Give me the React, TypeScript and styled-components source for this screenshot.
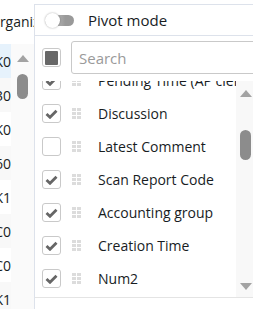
import React from 'react';
import styled, { createGlobalStyle } from 'styled-components';

const GlobalStyle = createGlobalStyle`
  html, body {
    margin: 0;
    padding: 0;
    background: #fff;
  }
  body {
    font-family: "Open Sans", "Noto Sans", sans-serif;
    color: #181d1f;
  }
`;

const Frame = styled.div`
  width: 253px;
  height: 309px;
  overflow: hidden;
  display: flex;
  background: #fff;
`;

/* ---- grid strip on the left ---- */

const GridStrip = styled.div`
  width: 34px;
  flex: 0 0 34px;
  display: flex;
  flex-direction: column;
  overflow: hidden;
`;

const GridHeader = styled.div`
  flex: 0 0 auto;
  height: 43px;
  padding-bottom: 2px;
  box-sizing: content-box;
  border-bottom: 1px solid #dde2eb;
  display: flex;
  align-items: center;
  overflow: hidden;
  font-size: 14px;
  white-space: nowrap;
`;

const HeaderText = styled.span`
  margin-left: -11px;
  color: #181d1f;
`;

const GridBody = styled.div`
  flex: 1;
  display: flex;
  margin-top: -2px;
`;

const CellColumn = styled.div`
  width: 11px;
  display: flex;
  flex-direction: column;
`;

const Cell = styled.div<{ $tone: 'sel' | 'odd' | 'even' }>`
  flex: 0 0 34px;
  height: 34px;
  display: flex;
  align-items: center;
  justify-content: flex-end;
  overflow: hidden;
  white-space: nowrap;
  font-size: 14px;
  background: ${({ $tone }) =>
    $tone === 'sel' ? '#e6f2fc' : $tone === 'odd' ? '#f8f8f8' : '#fff'};
`;

const ScrollTrack = styled.div<{ $pad: number }>`
  flex: 1;
  background: #fafafa;
  display: flex;
  flex-direction: column;
  align-items: center;
  padding-top: ${({ $pad }) => $pad}px;
`;

const ArrowUp = styled.div`
  flex: 0 0 auto;
  width: 0;
  height: 0;
  border-left: 6px solid transparent;
  border-right: 6px solid transparent;
  border-bottom: 7px solid #a3a3a3;
`;

const ArrowDown = styled(ArrowUp)`
  border-bottom: none;
  border-top: 7px solid #a3a3a3;
`;

const Thumb = styled.div<{ $top: number; $h: number }>`
  flex: 0 0 auto;
  margin-top: ${({ $top }) => $top}px;
  width: 11px;
  height: ${({ $h }) => $h}px;
  border-radius: 6px;
  background: #8c8c8c;
`;

/* ---- columns tool panel ---- */

const Panel = styled.div`
  flex: 1;
  margin-top: 4px;
  border-top: 1px solid #dde2eb;
  border-left: 1px solid #dde2eb;
  display: flex;
  flex-direction: column;
  overflow: hidden;
`;

const PivotRow = styled.div`
  flex: 0 0 auto;
  height: 30px;
  border-bottom: 1px solid #dde2eb;
  display: flex;
  align-items: center;
  padding-left: 10px;
  gap: 14px;
  font-size: 15px;
`;

const Toggle = styled.div`
  position: relative;
  width: 29px;
  height: 11px;
  border-radius: 6px;
  background: linear-gradient(90deg, #d6d6d6, #999 70%);
`;

const Knob = styled.div`
  position: absolute;
  left: 0;
  top: -2px;
  width: 15px;
  height: 15px;
  border-radius: 50%;
  background: #fff;
  box-shadow: 0 0 2px rgba(0, 0, 0, 0.35);
`;

const SearchRow = styled.div`
  flex: 0 0 auto;
  height: 33px;
  padding: 5px 0 7px 7px;
  display: flex;
  align-items: center;
  gap: 10px;
`;

const Box = styled.div`
  flex: 0 0 auto;
  box-sizing: border-box;
  width: 19px;
  height: 19px;
  border: 1px solid #c9c9c9;
  border-radius: 3px;
  background: #fff;
  display: flex;
  align-items: center;
  justify-content: center;
`;

const Indeterminate = styled.div`
  width: 13px;
  height: 14px;
  border-radius: 1px;
  background: #686868;
`;

const SearchInput = styled.div`
  flex: 0 0 220px;
  box-sizing: border-box;
  height: 33px;
  border: 1px solid #c9c9c9;
  border-radius: 3px;
  display: flex;
  align-items: center;
  padding-left: 7px;
  font-size: 15px;
  color: #9a9a9a;
`;

const ListArea = styled.div`
  flex: 0 0 auto;
  height: 216px;
  border-bottom: 1px solid #e4e4e4;
  display: flex;
  overflow: hidden;
`;

const List = styled.div`
  flex: 1;
  overflow: hidden;
`;

const ListInner = styled.div`
  margin-top: -17px;
`;

const Item = styled.div`
  height: 33px;
  display: flex;
  align-items: center;
  padding-left: 7px;
  white-space: nowrap;
  font-size: 14px;
`;

const Grip = styled.svg`
  margin-left: 11px;
  margin-right: 17px;
  flex: 0 0 auto;
`;

const PanelScroll = styled.div`
  flex: 0 0 15px;
  background: #f8f8f8;
  display: flex;
  flex-direction: column;
  align-items: center;
  padding-top: 9px;
  padding-bottom: 7px;
  padding-left: 2px;
`;

const Spacer = styled.div`
  flex: 1;
`;

const CheckMark = () => (
  <svg width="13" height="10" viewBox="0 0 13 10">
    <path d="M1.5 5 L5 8.3 L11.5 1.7" fill="none" stroke="#666" strokeWidth="2.8" />
  </svg>
);

const GripIcon = () => (
  <Grip width="9" height="11" viewBox="0 0 9 11">
    {[0, 4, 8].map((y) =>
      [0, 5].map((x) => <rect key={`${x}-${y}`} x={x} y={y} width="4" height="3" fill="#dcdcdc" />)
    )}
  </Grip>
);

const cells = ['ABK0', 'X30', 'ABK0', 'X60', 'ABK1', 'ABC0', 'ABC0', 'ABK1'];

const columns: { label: string; checked: boolean }[] = [
  { label: 'Pending Time (AP clerk)', checked: true },
  { label: 'Discussion', checked: true },
  { label: 'Latest Comment', checked: false },
  { label: 'Scan Report Code', checked: true },
  { label: 'Accounting group', checked: true },
  { label: 'Creation Time', checked: true },
  { label: 'Num2', checked: true },
];

export default function App() {
  return (
    <>
      <GlobalStyle />
      <Frame>
        <GridStrip>
          <GridHeader>
            <HeaderText>Organization</HeaderText>
          </GridHeader>
          <GridBody>
            <CellColumn>
              {cells.map((c, i) => (
                <Cell key={i} $tone={i === 0 ? 'sel' : i % 2 ? 'odd' : 'even'}>
                  {c}
                </Cell>
              ))}
            </CellColumn>
            <ScrollTrack $pad={11}>
              <ArrowUp />
              <Thumb $top={12} $h={25} />
            </ScrollTrack>
          </GridBody>
        </GridStrip>

        <Panel>
          <PivotRow>
            <Toggle>
              <Knob />
            </Toggle>
            <span>Pivot mode</span>
          </PivotRow>
          <SearchRow>
            <Box>
              <Indeterminate />
            </Box>
            <SearchInput>Search</SearchInput>
          </SearchRow>
          <ListArea>
            <List>
              <ListInner>
                {columns.map((col) => (
                  <Item key={col.label}>
                    <Box>{col.checked && <CheckMark />}</Box>
                    <GripIcon />
                    <span>{col.label}</span>
                  </Item>
                ))}
              </ListInner>
            </List>
            <PanelScroll>
              <ArrowUp />
              <Thumb $top={33} $h={30} />
              <Spacer />
              <ArrowDown />
            </PanelScroll>
          </ListArea>
        </Panel>
      </Frame>
    </>
  );
}
